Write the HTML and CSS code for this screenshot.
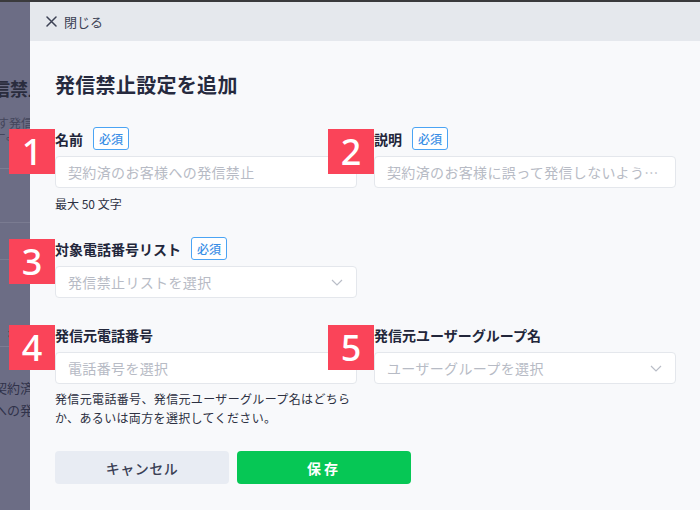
FILE: index.html
```html
<!DOCTYPE html>
<html lang="ja">
<head>
<meta charset="utf-8">
<title>発信禁止設定を追加</title>
<link rel="stylesheet" href="styles.css">
</head>
<body>
<div class="topline"></div>
<div class="screen">
  <div class="backdrop">
    <div class="bd-title">発信禁止</div>
    <div class="bd-text bd-t1">ます発信</div>
    <div class="bd-text bd-t2">ー。</div>
    <div class="bd-line bd-l1"></div>
    <div class="bd-box"></div>
    <div class="bd-label">名前</div>
    <div class="bd-line bd-l2"></div>
    <div class="bd-para">
      <div>契約済</div>
      <div>への発</div>
    </div>
  </div>
  <div class="panel">
    <header class="panel-head">
      <svg class="close-icon" width="11" height="11" viewBox="0 0 11 11"><path d="M1 1L10 10M10 1L1 10" stroke="#3c4154" stroke-width="1.5" fill="none" stroke-linecap="round"/></svg>
      <span>閉じる</span>
    </header>
    <main class="panel-body">
      <h1 class="title">発信禁止設定を追加</h1>
      <div class="form-grid">
        <div class="field">
          <span class="num">1</span>
          <div class="label-row"><span class="label">名前</span><span class="req">必須</span></div>
          <div class="input"><span class="ph">契約済のお客様への発信禁止</span></div>
          <div class="hint">最大 50 文字</div>
        </div>
        <div class="field">
          <span class="num">2</span>
          <div class="label-row"><span class="label">説明</span><span class="req">必須</span></div>
          <div class="input"><span class="ph">契約済のお客様に誤って発信しないように設定</span></div>
        </div>
        <div class="field">
          <span class="num">3</span>
          <div class="label-row"><span class="label">対象電話番号リスト</span><span class="req">必須</span></div>
          <div class="input select"><span class="ph">発信禁止リストを選択</span>
            <svg class="chev" width="12" height="7" viewBox="0 0 12 7"><path d="M1 1L6 6L11 1" stroke="#b9bdc7" stroke-width="1.2" fill="none"/></svg>
          </div>
        </div>
        <div class="field empty"></div>
        <div class="field">
          <span class="num">4</span>
          <div class="label-row"><span class="label">発信元電話番号</span></div>
          <div class="input"><span class="ph">電話番号を選択</span></div>
          <div class="help">発信元電話番号、発信元ユーザーグループ名はどちらか、あるいは両方を選択してください。</div>
        </div>
        <div class="field">
          <span class="num">5</span>
          <div class="label-row"><span class="label">発信元ユーザーグループ名</span></div>
          <div class="input select"><span class="ph">ユーザーグループを選択</span>
            <svg class="chev" width="12" height="7" viewBox="0 0 12 7"><path d="M1 1L6 6L11 1" stroke="#b9bdc7" stroke-width="1.2" fill="none"/></svg>
          </div>
        </div>
      </div>
      <div class="actions">
        <button class="btn btn-cancel">キャンセル</button>
        <button class="btn btn-save">保存</button>
      </div>
    </main>
  </div>
</div>
</body>
</html>
```
FILE: styles.css
```css
* { box-sizing: border-box; }
html, body { margin: 0; padding: 0; }
body {
  width: 700px;
  height: 510px;
  overflow: hidden;
  font-family: "Noto Sans CJK JP", "Noto Sans", sans-serif;
  color: #23273a;
  background: #f8f9fb;
}
.topline { height: 2px; background: #3a3a3c; }
.screen { display: flex; height: 508px; }

.backdrop {
  width: 30px;
  flex: none;
  background: #6c6d85;
  overflow: hidden;
  display: flex;
  flex-direction: column;
  align-items: flex-end;
  white-space: nowrap;
}
.bd-title {
  margin-top: 74px;
  margin-right: -16px;
  font-size: 18px;
  font-weight: 700;
  line-height: 24px;
  color: #2a2c3d;
}
.bd-text { font-size: 12px; line-height: 12px; color: #44465c; }
.bd-t1 { margin-top: 17px; margin-right: -3px; }
.bd-t2 { margin-right: 12px; }
.bd-line { align-self: stretch; height: 1px; background: #7c7d93; }
.bd-l1 { margin-top: 27px; }
.bd-box {
  align-self: stretch;
  margin-top: 53px;
  height: 38px;
  border-top: 1px solid #7a7b91;
  border-bottom: 1px solid #7a7b91;
}
.bd-label {
  margin-top: 64px;
  margin-right: -4px;
  font-size: 13px;
  font-weight: 700;
  line-height: 18px;
  color: #2a2c3d;
}
.bd-l2 { margin-top: 4px; }
.bd-para {
  margin-top: 30px;
  margin-right: -3px;
  font-size: 13px;
  line-height: 22px;
  color: #30324a;
}

.panel { flex: 1; display: flex; flex-direction: column; background: #f8f9fb; }
.panel-head {
  height: 39px;
  flex: none;
  background: #e5e8ed;
  display: flex;
  align-items: center;
  padding-left: 16px;
  gap: 7px;
  font-size: 13px;
  color: #3c4154;
}
.close-icon { display: block; }
.panel-body { padding: 30px 24px 0 25px; }
.title {
  margin: 0 0 28px;
  font-size: 20px;
  line-height: 28px;
  font-weight: 700;
  color: #262a3e;
  letter-spacing: 0.3px;
}
.form-grid {
  display: grid;
  grid-template-columns: 302px 302px;
  column-gap: 17px;
  row-gap: 25px;
}
.field { position: relative; }
.num {
  position: absolute;
  left: -46px;
  top: 2px;
  width: 46px;
  height: 45px;
  background: #fa4459;
  color: #fff;
  font-family: "Noto Sans", sans-serif;
  font-size: 36px;
  font-weight: 500;
  line-height: 45px;
  text-align: center;
}
.label-row {
  height: 23px;
  display: flex;
  align-items: center;
  gap: 10px;
  margin-bottom: 6px;
}
.label { font-size: 14px; font-weight: 700; color: #22263a; }
.req {
  height: 23px;
  padding: 0 5px;
  border: 1px solid #4ba4f4;
  border-radius: 3px;
  font-size: 12px;
  font-weight: 500;
  line-height: 21px;
  color: #3b8fe6;
  background: #fff;
}
.input {
  height: 32px;
  background: #fff;
  border: 1px solid #e4e7ec;
  border-radius: 4px;
  display: flex;
  align-items: center;
  padding: 0 13px 0 12px;
  gap: 8px;
}
.ph {
  flex: 1;
  min-width: 0;
  font-size: 14px;
  letter-spacing: 0.35px;
  color: #b7bbc5;
  white-space: nowrap;
  overflow: hidden;
  text-overflow: ellipsis;
}
.chev { display: block; flex: none; }
.hint {
  margin-top: 8px;
  font-size: 12px;
  line-height: 16px;
  color: #2c3042;
}
.help {
  margin-top: 5px;
  font-size: 12px;
  line-height: 19px;
  letter-spacing: 0.35px;
  color: #2c3042;
}
.actions { display: flex; gap: 8px; margin-top: 24px; }
.btn {
  width: 174px;
  height: 33px;
  border: none;
  border-radius: 4px;
  font-family: inherit;
  font-size: 14px;
  font-weight: 500;
  cursor: pointer;
}
.btn-cancel { background: #e8ecf3; color: #3a3f55; letter-spacing: 0.5px; }
.btn-save { background: #06c755; color: #fff; font-weight: 700; letter-spacing: 3px; }
```
